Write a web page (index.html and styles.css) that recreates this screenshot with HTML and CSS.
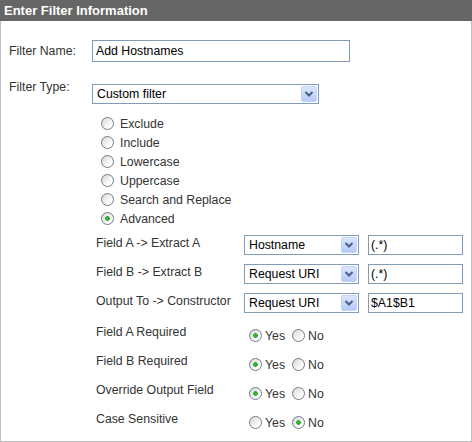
FILE: index.html
```html
<!DOCTYPE html>
<html lang="en">
	<head>
		<title>Enter Filter Information</title>
		<link rel="stylesheet" href="styles.css">
	</head>
	<body>
		<div class="panel">
			<div class="panel-title">Enter Filter Information</div>
			<div class="panel-body">
				<div class="row row-name">
					<label class="label" for="name">Filter Name:</label>
					<input id="name" class="text text-name" type="text" value="Add Hostnames">
				</div>
				<div class="row row-type">
					<label class="label">Filter Type:</label>
					<div class="select select-wide">
						<select><option>Custom filter</option></select>
						<span class="select-btn"><svg width="16" height="16" viewBox="0 0 16 16"><polyline points="4.5,6 8,9.5 11.5,6" fill="none" stroke="#4a5f86" stroke-width="2"/></svg></span>
					</div>
				</div>
				<div class="types">
					<div class="option"><input type="radio" name="type"><span>Exclude</span></div>
					<div class="option"><input type="radio" name="type"><span>Include</span></div>
					<div class="option"><input type="radio" name="type"><span>Lowercase</span></div>
					<div class="option"><input type="radio" name="type"><span>Uppercase</span></div>
					<div class="option"><input type="radio" name="type"><span>Search and Replace</span></div>
					<div class="option"><input type="radio" name="type" checked><span>Advanced</span></div>
				</div>
				<div class="fields">
					<div class="field-row">
						<span class="field-label">Field A -&gt; Extract A</span>
						<div class="select select-small">
							<select><option>Hostname</option></select>
							<span class="select-btn"><svg width="16" height="16" viewBox="0 0 16 16"><polyline points="4.5,6 8,9.5 11.5,6" fill="none" stroke="#4a5f86" stroke-width="2"/></svg></span>
						</div>
						<input class="text text-small" type="text" value="(.*)">
					</div>
					<div class="field-row">
						<span class="field-label">Field B -&gt; Extract B</span>
						<div class="select select-small">
							<select><option>Request URI</option></select>
							<span class="select-btn"><svg width="16" height="16" viewBox="0 0 16 16"><polyline points="4.5,6 8,9.5 11.5,6" fill="none" stroke="#4a5f86" stroke-width="2"/></svg></span>
						</div>
						<input class="text text-small" type="text" value="(.*)">
					</div>
					<div class="field-row">
						<span class="field-label">Output To -&gt; Constructor</span>
						<div class="select select-small">
							<select><option>Request URI</option></select>
							<span class="select-btn"><svg width="16" height="16" viewBox="0 0 16 16"><polyline points="4.5,6 8,9.5 11.5,6" fill="none" stroke="#4a5f86" stroke-width="2"/></svg></span>
						</div>
						<input class="text text-small" type="text" value="$A1$B1">
					</div>
				</div>
				<div class="flags">
					<div class="flag-row">
						<span class="flag-label">Field A Required</span>
						<span class="yesno"><input type="radio" name="reqa" checked><span class="yes">Yes</span><input type="radio" name="reqa"><span>No</span></span>
					</div>
					<div class="flag-row">
						<span class="flag-label">Field B Required</span>
						<span class="yesno"><input type="radio" name="reqb" checked><span class="yes">Yes</span><input type="radio" name="reqb"><span>No</span></span>
					</div>
					<div class="flag-row">
						<span class="flag-label">Override Output Field</span>
						<span class="yesno"><input type="radio" name="over" checked><span class="yes">Yes</span><input type="radio" name="over"><span>No</span></span>
					</div>
					<div class="flag-row">
						<span class="flag-label">Case Sensitive</span>
						<span class="yesno"><input type="radio" name="case"><span class="yes">Yes</span><input type="radio" name="case" checked><span>No</span></span>
					</div>
				</div>
			</div>
		</div>
	</body>
</html>
```

FILE: styles.css
```css
body, html {
	margin:0;
	padding:0;
	font-family:"Liberation Sans",Arial,sans-serif;
	font-size:12.3px;
	color:#333;
}
.panel {
	width:472px;
	height:442px;
	display:flex;
	flex-direction:column;
}
.panel-title {
	height:21px;
	line-height:21px;
	padding-left:4px;
	background-color:#666;
	color:#fff;
	font-size:13px;
	font-weight:bold;
}
.panel-body {
	flex:1;
	padding:19px 0 0 8px;
	border:1px solid #c0c0c0;
	border-top:none;
}
.row {
	display:flex;
}
.row-name {
	align-items:center;
}
.row-type {
	margin-top:18px;
	align-items:flex-start;
}
.label {
	width:83px;
	line-height:15px;
}
.row-type .select {
	margin-top:4px;
}
.text {
	box-sizing:border-box;
	border:1px solid #7f9db9;
	font-family:inherit;
	font-size:12.3px;
	color:#000;
	margin:0;
	outline:none;
}
.text-name {
	width:258px;
	height:22px;
	padding:0 3px;
}
.text-small {
	width:95px;
	height:20px;
	padding:0 2px;
}
.select {
	box-sizing:border-box;
	display:flex;
	height:20px;
	border:1px solid #7f9db9;
	background-color:#fff;
}
.select-wide {
	width:227px;
}
.select-small {
	width:115px;
	margin-right:9px;
}
.select select {
	flex:1;
	min-width:0;
	-webkit-appearance:none;
	appearance:none;
	border:none;
	background:transparent;
	padding:0 0 0 4px;
	margin:0;
	font-family:inherit;
	font-size:12.3px;
	color:#000;
	outline:none;
}
.select-btn {
	box-sizing:border-box;
	width:16px;
	height:16px;
	margin:1px;
	border:1px solid #c3d3fb;
	border-radius:2px;
	background:linear-gradient(#dbe6fe,#b6caf7);
	display:flex;
}
.select-btn svg {
	margin:-1px;
}
.types {
	margin-top:10px;
	padding-left:92px;
}
.option {
	height:19px;
	display:flex;
	align-items:center;
}
input[type=radio] {
	-webkit-appearance:none;
	appearance:none;
	box-sizing:border-box;
	width:13px;
	height:13px;
	margin:0 6px 0 0;
	border:1px solid #6f7c8c;
	border-radius:50%;
	background:linear-gradient(135deg,#d6d6d2,#fff 75%);
}
input[type=radio]:checked {
	background:radial-gradient(circle,#35c035 0,#2aa52a 2px,transparent 2.6px),linear-gradient(135deg,#d6d6d2,#fff 75%);
}
.fields {
	margin-top:7px;
	padding-left:87px;
}
.field-row {
	height:29px;
	display:flex;
	align-items:flex-start;
}
.field-label {
	width:148px;
	line-height:17px;
}
.flags {
	margin-top:2px;
	padding-left:87px;
}
.flag-row {
	height:29px;
	display:flex;
	align-items:flex-start;
}
.flag-label {
	width:153px;
	line-height:17px;
}
.yesno {
	margin-top:3px;
	height:17px;
	display:flex;
	align-items:center;
}
.yesno input[type=radio] {
	margin-right:3px;
}
.yes {
	margin-right:7px;
}
```
